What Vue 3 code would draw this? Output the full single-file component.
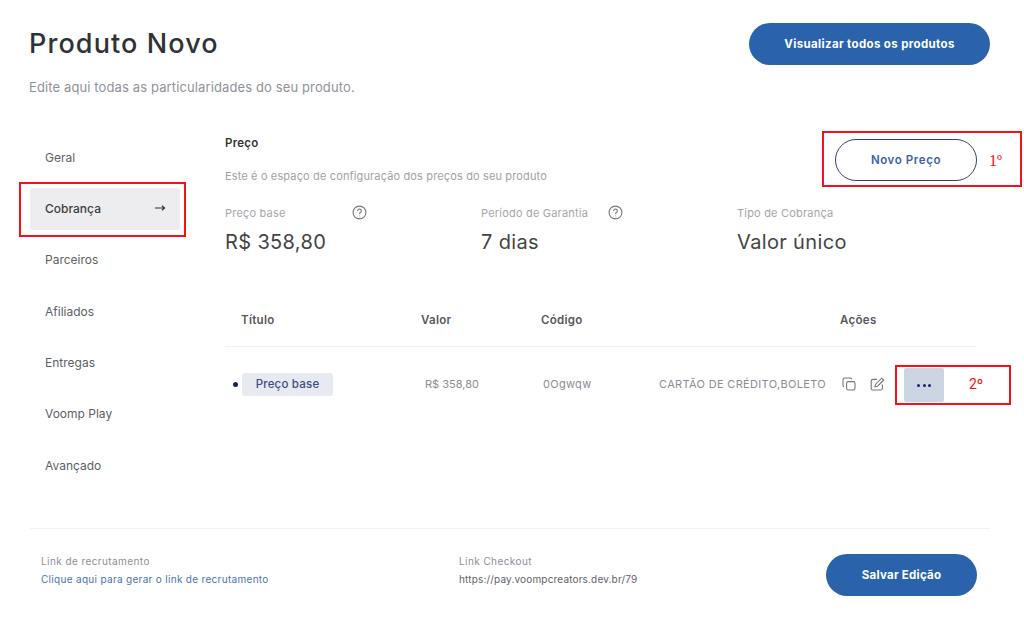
<template>
  <div class="page">
    <header class="top">
      <div>
        <h1>Produto Novo</h1>
        <p class="lead">Edite aqui todas as particularidades do seu produto.</p>
      </div>
      <button class="btn solid top-btn">Visualizar todos os produtos</button>
    </header>

    <div class="body">
      <nav class="side">
        <a v-for="item in menu" :key="item" class="side-item" :class="{ active: item === 'Cobrança' }">
          {{ item }}
          <svg v-if="item === 'Cobrança'" width="12" height="8" viewBox="0 0 12 8" fill="none" stroke="#333" stroke-width="1.2">
            <path d="M1 4h9.5M8 1.8 10.5 4 8 6.2" />
          </svg>
        </a>
      </nav>

      <main class="content">
        <div class="head-row">
          <div>
            <h2>Preço</h2>
            <p class="desc">Este é o espaço de configuração dos preços do seu produto</p>
          </div>
          <button class="btn outline">Novo Preço</button>
        </div>

        <div class="stats">
          <div v-for="s in stats" :key="s.label" class="stat">
            <div class="stat-label">
              {{ s.label }}
              <svg v-if="s.help" class="help" width="15" height="15" viewBox="0 0 15 15" fill="none" stroke="#777" stroke-width="1.1">
                <circle cx="7.5" cy="7.5" r="6.4" />
                <path d="M5.6 5.9a1.9 1.9 0 1 1 2.9 1.6c-.7.4-1 .8-1 1.5" />
                <path d="M7.5 10.6v.6" />
              </svg>
            </div>
            <div class="stat-value">{{ s.value }}</div>
          </div>
        </div>

        <div class="table">
          <div class="t-row t-head">
            <span>Título</span>
            <span>Valor</span>
            <span>Código</span>
            <span></span>
            <span>Ações</span>
          </div>
          <div class="t-row t-line">
            <span class="title-cell"><i class="dot"></i><b class="pill">Preço base</b></span>
            <span class="cell-value">R$ 358,80</span>
            <span class="cell-code">0Ogwqw</span>
            <span class="cell-type">CARTÃO DE CRÉDITO,BOLETO</span>
            <span class="actions">
              <svg width="14" height="14" viewBox="0 0 14 14" fill="none" stroke="#777" stroke-width="1.1">
                <rect x="4.6" y="4.6" width="8.4" height="8.4" rx="1.8" />
                <path d="M9.8 2.2A1.6 1.6 0 0 0 8.4 1H2.8A1.8 1.8 0 0 0 1 2.8v5.6c0 .7.5 1.2 1.1 1.4" />
              </svg>
              <svg width="15" height="14" viewBox="0 0 15 14" fill="none" stroke="#777" stroke-width="1.1">
                <path d="M7 2.4H3A1.8 1.8 0 0 0 1.2 4.2v7.6A1.8 1.8 0 0 0 3 13h7.6a1.8 1.8 0 0 0 1.8-1.8V7.6" />
                <path d="M11.6 1.2 13.6 3.2 7.6 9.2 5 9.8l.6-2.6z" />
              </svg>
              <button class="more"><i></i><i></i><i></i></button>
            </span>
          </div>
        </div>
      </main>
    </div>

    <footer class="foot">
      <div class="foot-col first">
        <span class="foot-label">Link de recrutamento</span>
        <a class="foot-link">Clique aqui para gerar o link de recrutamento</a>
      </div>
      <div class="foot-col second">
        <span class="foot-label">Link Checkout</span>
        <a class="foot-url">https://pay.voompcreators.dev.br/79</a>
      </div>
      <button class="btn solid save">Salvar Edição</button>
    </footer>

    <!-- marcações vermelhas do print -->
    <div class="mark mark-menu"></div>
    <div class="mark mark-new"><span class="one">1º</span></div>
    <div class="mark mark-more"><span class="two">2º</span></div>
  </div>
</template>

<script setup>
const menu = ['Geral', 'Cobrança', 'Parceiros', 'Afiliados', 'Entregas', 'Voomp Play', 'Avançado']

const stats = [
  { label: 'Preço base', value: 'R$ 358,80', help: true },
  { label: 'Período de Garantia', value: '7 dias', help: true },
  { label: 'Tipo de Cobrança', value: 'Valor único', help: false }
]
</script>

<style>
body {
  background: #fff;
}
</style>

<style scoped>
.page {
  position: relative;
  width: 1024px;
  height: 626px;
  overflow: hidden;
  font-family: Inter, "Open Sans", sans-serif;
  color: #333;
}

.top {
  display: flex;
  justify-content: space-between;
  align-items: flex-start;
  padding: 23px 34px 0 29px;
  height: 139px;
  box-sizing: border-box;
}

h1 {
  margin: 4px 0 0;
  font-size: 27px;
  line-height: 34px;
  font-weight: 500;
  letter-spacing: 1.1px;
  color: #2f3237;
}

.lead {
  margin: 17px 0 0;
  font-size: 13px;
  line-height: 18px;
  color: #8f9298;
  letter-spacing: 0.12px;
}

.btn {
  border-radius: 22px;
  font-family: inherit;
  font-size: 11.5px;
  font-weight: 700;
  cursor: pointer;
}

.solid {
  border: 0;
  background: #2a63ab;
  color: #fff;
}

.top-btn {
  width: 241px;
  height: 42px;
  letter-spacing: 0.36px;
}

.outline {
  width: 142px;
  height: 42px;
  flex: none;
  background: #fff;
  border: 1px solid #393f78;
  color: #3b62ad;
  letter-spacing: 0.6px;
  font-weight: 600;
}

.body {
  display: flex;
  height: 389px;
}

.side {
  display: flex;
  flex-direction: column;
  gap: 9.4px;
  width: 150px;
  margin: -2px 45px 0 30px;
}

.side-item {
  display: flex;
  justify-content: space-between;
  align-items: center;
  height: 42px;
  flex: none;
  padding: 0 14px 2px 15px;
  box-sizing: border-box;
  border-radius: 3px;
  font-size: 12px;
  font-weight: 400;
  color: #5c5f66;
}

.side-item.active {
  background: #ededf0;
  color: #3a3c42;
  font-weight: 500;
}

.content {
  width: 752px;
}

.head-row {
  display: flex;
  justify-content: space-between;
  align-items: flex-start;
  height: 65px;
}

h2 {
  margin: -4px 0 0;
  font-size: 11.5px;
  line-height: 16px;
  font-weight: 600;
  letter-spacing: 0.25px;
  color: #333;
}

.desc {
  margin: 17px 0 0;
  font-size: 11px;
  line-height: 16px;
  letter-spacing: 0.14px;
  color: #a0a2a7;
}

.stats {
  display: grid;
  grid-template-columns: repeat(3, 256px);
}

.stat-label {
  position: relative;
  font-size: 11px;
  line-height: 18px;
  letter-spacing: 0.2px;
  color: #a4a6ab;
}

.help {
  position: absolute;
  top: 1px;
  left: 127px;
}

.stat-value {
  margin-top: 6px;
  font-size: 20px;
  line-height: 28px;
  font-weight: 400;
  letter-spacing: 0.35px;
  color: #444;
}

.table {
  margin-top: 38px;
}

.t-row {
  display: grid;
  grid-template-columns: 180px 120px 118px 181px 1fr;
  padding-left: 16px;
  align-items: center;
}

.t-head {
  height: 52px;
  border-bottom: 1px solid #f0f0f2;
  font-size: 11.5px;
  font-weight: 600;
  letter-spacing: 0.3px;
  color: #55585e;
}

.t-line {
  height: 74px;
  font-size: 11px;
  color: #8b8d93;
}

.title-cell {
  position: relative;
  display: flex;
  align-items: center;
}

.dot {
  position: absolute;
  left: -8px;
  width: 5px;
  height: 5px;
  border-radius: 50%;
  background: #14246a;
}

.pill {
  width: 91px;
  height: 23px;
  margin-left: 1px;
  line-height: 23px;
  text-align: center;
  border-radius: 3px;
  background: #e7eaf0;
  font-size: 11.5px;
  font-weight: 500;
  letter-spacing: 0.2px;
  color: #3c4a7f;
}

.cell-value {
  padding-left: 4px;
}

.cell-code {
  padding-left: 2px;
  letter-spacing: 0.3px;
}

.cell-type {
  font-size: 11px;
  white-space: nowrap;
  letter-spacing: 0.33px;
}

.actions {
  display: flex;
  align-items: center;
  gap: 14px;
  padding-left: 2px;
}

.more {
  display: flex;
  align-items: center;
  justify-content: center;
  gap: 2.5px;
  width: 40px;
  height: 34px;
  margin: 2px 0 0 5px;
  padding: 0;
  border: 0;
  border-radius: 2px;
  background: #cdd5e3;
}

.more i {
  width: 3px;
  height: 3px;
  border-radius: 50%;
  background: #14246a;
}

.foot {
  display: flex;
  align-items: flex-start;
  margin: 0 34px 0 30px;
  height: 70px;
  padding: 25px 13px 0 11px;
  border-top: 1px solid #f2f2f4;
  font-size: 10px;
}

.foot-col {
  display: flex;
  flex-direction: column;
  gap: 7px;
  margin-top: 2px;
}

.foot-col.first {
  width: 418px;
}

.foot-col.second {
  width: 367px;
}

.foot-label {
  line-height: 11px;
  letter-spacing: 0.42px;
  color: #8c8e94;
}

.foot-link {
  line-height: 11px;
  letter-spacing: 0.31px;
  color: #4b73b4;
}

.foot-url {
  line-height: 11px;
  letter-spacing: 0.17px;
  color: #5f6268;
}

.save {
  width: 151px;
  height: 42px;
  flex: none;
  letter-spacing: 0.25px;
}

.mark {
  position: absolute;
  box-sizing: border-box;
  border: 2.5px solid #f5101a;
  color: #f5101a;
}

.mark-menu {
  left: 19px;
  top: 182px;
  width: 167px;
  height: 55px;
}

.mark-new {
  left: 822px;
  top: 131px;
  width: 200px;
  height: 56px;
}

.mark-more {
  left: 895px;
  top: 365px;
  width: 116px;
  height: 40px;
}

.one,
.two {
  position: absolute;
}

.one {
  left: 165px;
  top: 19px;
  font-family: "Liberation Serif", serif;
  font-size: 16px;
}

.two {
  left: 72px;
  top: 9px;
  font-family: Roboto, sans-serif;
  font-size: 14px;
}
</style>
